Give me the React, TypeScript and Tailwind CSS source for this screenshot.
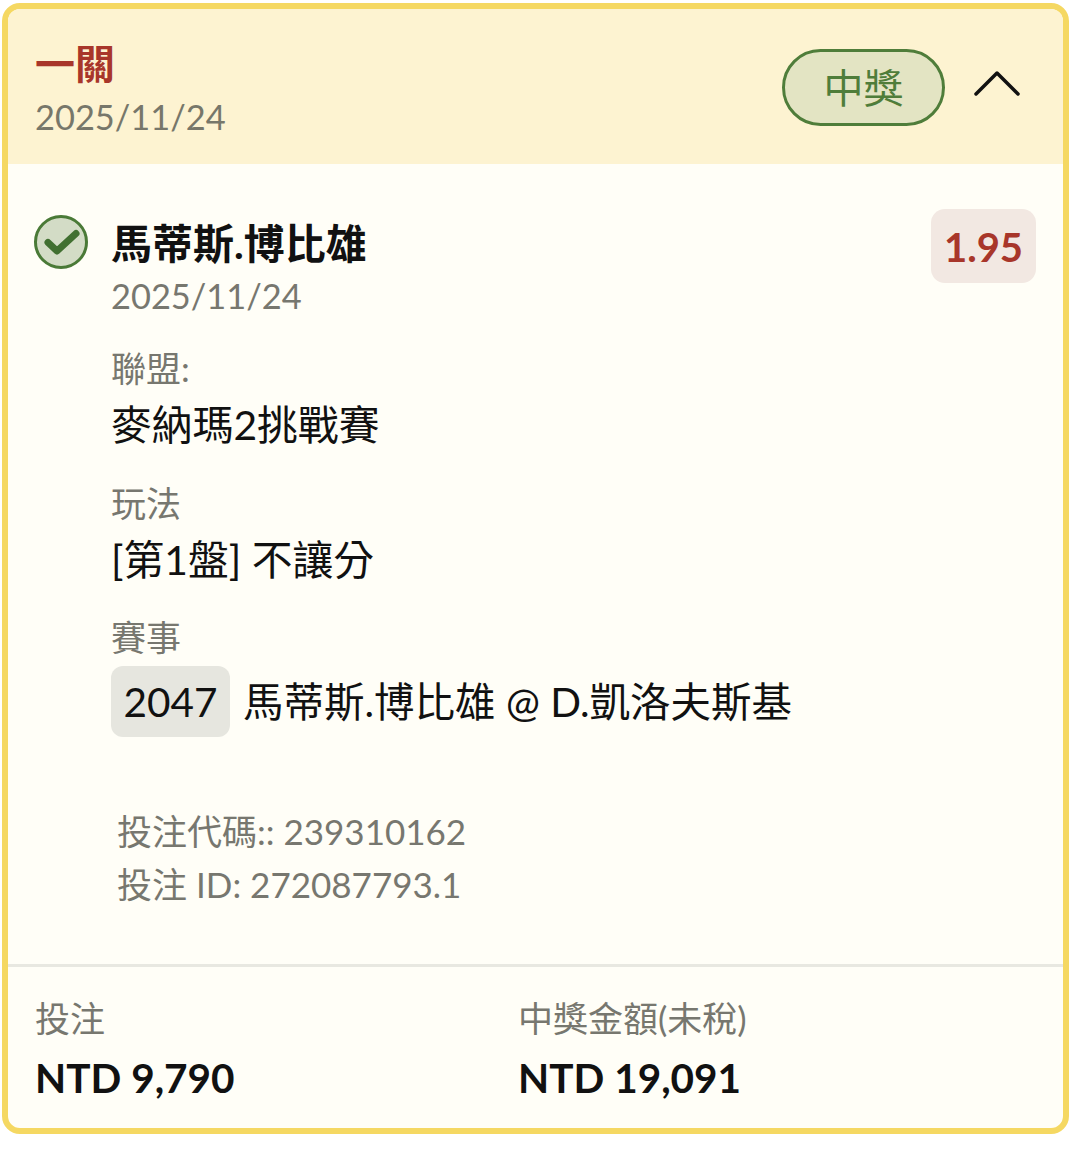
const Check = () => (
  <svg width="56" height="56" viewBox="0 0 56 56" className="shrink-0">
    <circle cx="28" cy="28" r="25.5" fill="#d3dcc6" stroke="#4a7a37" strokeWidth="3" />
    <path d="M15 28.500l9 8.500L43 19.500" fill="none" stroke="#417031" strokeWidth="7" strokeLinecap="round" strokeLinejoin="round" />
  </svg>
)

const Chevron = () => (
  <svg width="46" height="28" viewBox="0 0 46 28" className="ml-[29px] mr-[22px] mb-[8px]">
    <path d="M2 25L23 4l21 21" fill="none" stroke="#111" strokeWidth="3.500" strokeLinecap="round" strokeLinejoin="round" />
  </svg>
)

function Field({ label, children }: { label: string; children: React.ReactNode }) {
  return (
    <div className="mb-[22px]">
      <div className="text-[35px] leading-[50px] text-[#77776f]">{label}</div>
      <div className="text-[40.800px] leading-[63px] text-[#111]">{children}</div>
    </div>
  )
}

export default function App() {
  return (
    <div className="w-[1080px] h-[1157px] bg-white pt-[3px] pl-[2px] font-['Lato','Noto_Sans_CJK_TC',sans-serif]">
      <div className="w-[1067px] h-[1131px] rounded-[18px] border-[6px] border-[#f5d862] bg-[#fffef7] overflow-hidden flex flex-col">
        <div className="h-[155px] shrink-0 bg-[#fdf3d1] flex items-center justify-between pl-[27px] pr-[21px]">
          <div className="pb-[1px]">
            <div className="text-[40px] leading-[61px] font-bold text-[#a8362a]">一關</div>
            <div className="text-[34.400px] leading-[44px] text-[#77776a]">2025/11/24</div>
          </div>
          <div className="flex items-center">
            <span className="mt-[2px] w-[163px] h-[77px] rounded-full border-[3px] border-[#4f7d3a] bg-[#e3e4c3] text-[#4f7d3a] text-[40px] leading-none flex items-center justify-center">中獎</span>
            <Chevron />
          </div>
        </div>

        <div className="flex-1 flex flex-col pl-[25px] pr-[27px] pt-[45px]">
          <div className="flex items-start">
            <div className="mt-[5px] mr-[22px]"><Check /></div>
            <div className="flex-1 pt-[5px]">
              <div className="text-[41px] leading-[60px] font-bold text-[#111]">馬蒂斯.博比雄</div>
              <div className="text-[34.400px] leading-[44px] text-[#77776f]">2025/11/24</div>
            </div>
            <span className="w-[105px] h-[74px] rounded-[14px] bg-[#f2e8e2] text-[#a8362a] text-[40px] font-bold flex items-center justify-center pt-[2px]">1.95</span>
          </div>

          <div className="pl-[78px] pt-[25px]">
            <Field label="聯盟:">麥納瑪2挑戰賽</Field>
            <Field label="玩法">[第1盤] 不讓分</Field>
            <div className="mt-[1px] text-[35px] leading-[48px] text-[#77776f] mb-[5px]">賽事</div>
            <div className="flex items-center text-[40.500px] text-[#111]">
              <span className="w-[119px] h-[71px] rounded-[12px] bg-[#e6e6df] flex items-center justify-center mr-[13px] pt-[2px]">2047</span>
              <span className="pt-[2px]">馬蒂斯.博比雄 @ D.凱洛夫斯基</span>
            </div>
          </div>

          <div className="pl-[84px] pt-[68px] text-[35px] leading-[53px] text-[#77776f]">
            <div>投注代碼:: 239310162</div>
            <div>投注 ID: 272087793.1</div>
          </div>
        </div>

        <div className="h-[164px] shrink-0 border-t-[3px] border-[#e8e8e1] grid grid-cols-[483px_1fr] pl-[27px] pt-[26px]">
          <div>
            <div className="text-[35px] leading-[51px] text-[#77776f]">投注</div>
            <div className="text-[40.500px] leading-[68px] font-bold text-[#111]">NTD 9,790</div>
          </div>
          <div>
            <div className="text-[35px] leading-[51px] text-[#77776f]">中獎金額(未稅)</div>
            <div className="text-[40.500px] leading-[68px] font-bold text-[#111]">NTD 19,091</div>
          </div>
        </div>
      </div>
    </div>
  )
}
